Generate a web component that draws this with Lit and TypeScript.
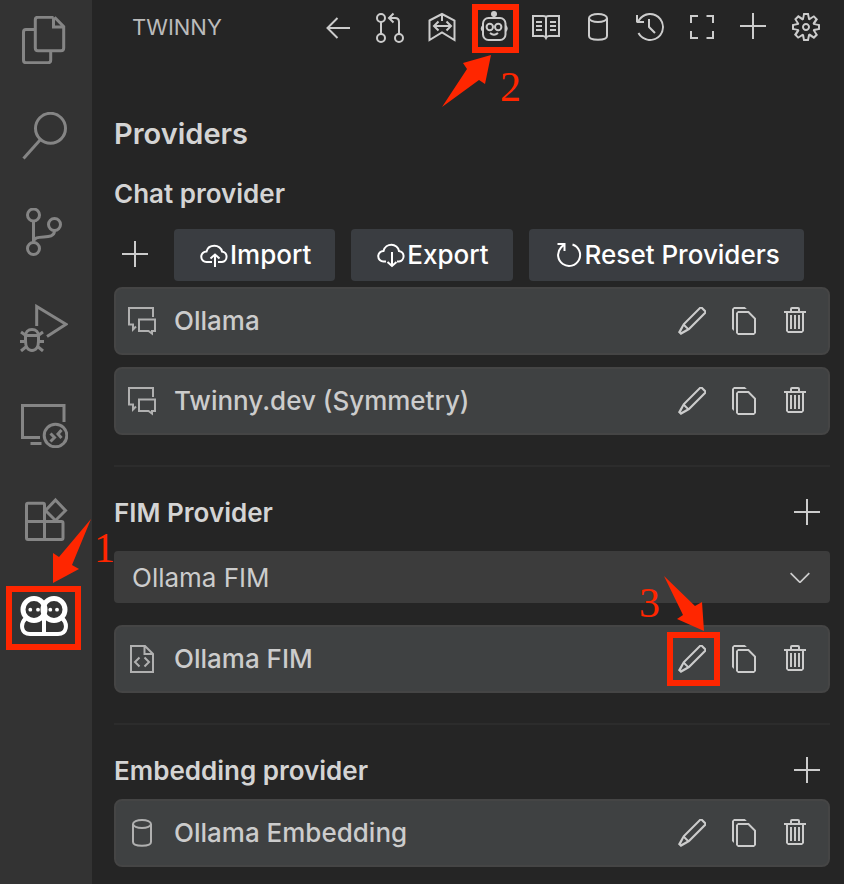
import { LitElement, html, svg, css, nothing, type SVGTemplateResult } from "lit";
import { customElement } from "lit/decorators.js";

const outline = (body: SVGTemplateResult, width = 2) =>
  svg`<g fill="none" stroke="currentColor" stroke-width=${width}>${body}</g>`;
const solid = (d: string) =>
  svg`<path transform="scale(2)" fill="currentColor" fill-rule="evenodd" d=${d} />`;

const database = outline(svg`<ellipse cx="16" cy="7" rx="9" ry="4" /><path d="M7 7V25C7 30 25 30 25 25V7" />`);

/* Drawn on a 32-unit grid */
const icons: Record<string, SVGTemplateResult> = {
  back: outline(svg`<path d="M28 17H6M15.5 7 5.5 17 15.5 27" />`),
  pull: outline(svg`<circle cx="7" cy="7" r="4" /><circle cx="7" cy="27" r="4" /><circle cx="25" cy="27" r="4" /><path d="M7 11V23M25 23V11Q25 7 21 7H15M19.5 2.5 15 7 19.5 11.5" />`),
  map: outline(svg`<path d="M3.5 9.5 16 3 28.5 9.5V29L16 21.5 3.5 29ZM16 3V10M8 15H25M12.5 10.5 8 15 12.5 19.5M20.5 10.5 25 15 20.5 19.5" />`),
  robot: svg`${outline(svg`<rect x="5" y="7" width="22.5" height="22" rx="5.5" /><circle cx="11.8" cy="16" r="3.2" /><circle cx="20.2" cy="16" r="3.2" /><path d="M12 22Q16 25.5 20 22M16 3V7" />`)}<circle cx="16" cy="3" r="3" fill="currentColor" /><path fill="currentColor" d="M4.5 14Q1 17.5 4.5 21ZM28 14Q31.5 17.5 28 21Z" />`,
  book: outline(svg`<path d="M16 6Q15 5 13 5H3V25H13Q15 25 16 27Q17 25 19 25H29V5H19Q17 5 16 6V26M6 11H12M6 15H12M6 19H12M20 11H26M20 15H26M20 19H26" />`),
  database,
  history: solid("M13.507 12.324a7 7 0 0 0 .065-8.56A7 7 0 0 0 2 4.393V2H1v3.5l.5.5H5V5H2.811a6.008 6.008 0 1 1-.135 5.77l-.887.462a7 7 0 0 0 11.718 1.092zm-3.361-.97l.708-.707L8 7.792V4H7v4l.146.354 3 3z"),
  full: outline(svg`<path d="M5 12V5H12M20.5 5H27V12M27 20V27H20.5M12 27H5V20" />`),
  add: solid("M14 7v1H8v6H7V8H1V7h6V1h1v6h6z"),
  gear: solid("M9.1 4.4L8.6 2H7.4l-.5 2.4-.7.3-2-1.3-.9.8 1.3 2-.2.7-2.4.5v1.2l2.4.5.3.8-1.3 2 .8.8 2-1.3.8.3.4 2.3h1.2l.5-2.4.8-.3 2 1.3.8-.8-1.3-2 .3-.8 2.3-.4V7.4l-2.4-.5-.3-.8 1.3-2-.8-.8-2 1.3-.7-.2zM9.4 1l.5 2.4L12 2.1l2 2-1.4 2.1 2.4.4v2.8l-2.4.5L14 12l-2 2-2.1-1.4-.5 2.4H6.6l-.5-2.4L4 13.9l-2-2 1.4-2.1L1 9.4V6.6l2.4-.5L2.1 4l2-2 2.1 1.4.4-2.4h2.8zm.6 7c0 1.1-.9 2-2 2s-2-.9-2-2 .9-2 2-2 2 .9 2 2zM8 9c.6 0 1-.4 1-1s-.4-1-1-1-1 .4-1 1 .4 1 1 1z"),
  edit: solid("M13.23 1h-1.46L3.52 9.25l-.16.22L1 13.59 2.41 15l4.12-2.36.22-.16L15 4.23V2.77L13.23 1zM2.41 13.59l1.51-3 1.45 1.45-2.96 1.55zm3.83-2.06L4.47 9.76l8-8 1.77 1.77-8 8z"),
  copy: solid("M4 4l1-1h5.414L14 6.586V14l-1 1H5l-1-1V4zm9 3l-3-3H5v10h8V7zM3 1L2 2v10l1 1V2h6.414l-1-1H3z"),
  trash: solid("M10 3h3v1h-1v9l-1 1H4l-1-1V4H2V3h3V2a1 1 0 0 1 1-1h3a1 1 0 0 1 1 1v1zM9 2H6v1h3V2zM4 13h7V4H4v9zm2-8H5v7h1V5zm1 0h1v7H7V5zm2 0h1v7H9V5z"),
  chevron: solid("M7.976 10.072l4.357-4.357.62.618L8.284 11h-.618L3 6.333l.619-.618 4.357 4.357z"),
  upload: outline(svg`<path d="M14 23H8.500A5.2 5.2 0 0 1 8.500 12.5C9.5 8.5 13 6.8 16.5 6.8S23.5 9 24 12.5A5.3 5.3 0 0 1 24 23H20M17 28V16M12.5 19.500 17 15.5 21.5 19.5" />`),
  download: outline(svg`<path d="M11 22.5H8.5A5.2 5.2 0 0 1 8.5 12C9.5 8 13 5.8 16.5 5.8S23.5 8.5 24 12A5.3 5.3 0 0 1 24 22.5H22M17 13V27M12.5 23 17 27 21.5 23" />`),
  reset: outline(svg`<path d="M19.5 5.5A11 11 0 1 1 8 8.5L11 5.5M4.5 5H11.5V12" />`),
  chat: outline(svg`<path d="M27 12V3H3V19.5H7V24.5L10 21.5M13 14.5H29V26H26V28.5L22.5 26H13Z" />`),
  code: outline(svg`<path d="M5 3H19L27 11V29H5ZM18.5 3V11H27M13.5 14.5 9 19 13.5 23.5M18.5 14.5 23 19 18.5 23.5" />`),
};

/* Drawn on a 48-unit grid */
const activityIcons: Record<string, SVGTemplateResult> = {
  files: outline(svg`<path d="M33.5 1.3H18Q15.3 1.3 15.3 4V32Q15.3 34.7 18 34.7H41Q43.7 34.7 43.7 32V10.5L34.5 1.3M33.5 1.3V11H43.7M15 13.5H6Q3.5 13.5 3.5 16V44Q3.5 46.7 6 46.7H28Q30.7 46.7 30.7 44V35" />`, 3),
  search: outline(svg`<circle cx="30.5" cy="16.3" r="15" /><path d="M20.5 27.5 3.5 46.5" />`, 3),
  git: outline(svg`<circle cx="13.5" cy="7" r="6" /><circle cx="34.5" cy="16.5" r="6" /><circle cx="13.5" cy="40.5" r="6" /><path d="M13.5 13V34.5C13.5 24 34.5 34 34.5 22.5" />`, 3),
  debug: outline(svg`<path d="M16.7 22V2.5L46 20.3 27 32.5M6 31.5H18M0 37.5H6M18 37.5H24M1 28 6.5 32M23 28 17.5 32M1 47 7 42M23 47 17 42" /><path d="M12 25.5C16 25.5 18.5 28 18.5 32V37C18.5 43 16 46.5 12 46.5S5.5 43 5.5 37V32C5.5 28 8 25.5 12 25.5Z" />`, 3),
  remote: outline(svg`<path d="M44 22V5.5H2.5V37.5H20M10.5 43.5H21.5M30.5 33.5 34.5 37.5 30.5 41.5M41.5 30 38 34 41.5 38" /><circle cx="35.5" cy="35.5" r="11.3" />`, 3),
  blocks: outline(svg`<path d="M24.5 43.5V9Q24.5 7.3 23 7.3H8Q6.5 7.3 6.5 9V42Q6.5 43.5 8 43.5H41.5Q43 43.5 43 42V27Q43 25.5 41.5 25.5H6.5M35.5 4 45.5 14.5 35.5 24.5 25.5 14.5Z" />`, 3),
  twinny: svg`${outline(svg`<circle cx="14" cy="17.5" r="11" /><circle cx="34" cy="17.5" r="11" />`, 5)}${outline(svg`<path d="M5.500 26.5C0 32 1 42 10 42H38C47 42 48 32 42.5 26.5M24 26V42" />`, 4)}<g fill="currentColor"><circle cx="10.3" cy="17.7" r="1.9" /><circle cx="18" cy="17.7" r="1.9" /><circle cx="30.3" cy="17.7" r="1.9" /><circle cx="37" cy="17.7" r="1.9" /></g>`,
};

const icon = (name: string) => html`<svg class="icon" viewBox="0 0 32 32" aria-hidden="true">${icons[name]}</svg>`;

/* Numbered call-outs; coordinates start at the centre of the marked control */
interface Mark { n: string; box: [number, number, number, number]; arrow: string; at: [number, number]; }
const marks: Record<string, Mark> = {
  twinny: { n: "1", box: [-35, -27, 69, 58], arrow: "9,-33 9,-63 15,-59 47,-97 28,-51 35,-47", at: [50, -54] },
  robot: { n: "2", box: [-19, -20, 41, 43], arrow: "-3,28 -31,36 -27,42 -52,80 -15,53 -9,57", at: [6, 74] },
  edit: { n: "3", box: [-22, -24, 47, 48], arrow: "12,-28 10,-57 3,-53 -28,-83 -9,-44 -15,-40", at: [-53, -42] },
};
const mark = (m: Mark) => html`<svg class="mark" aria-hidden="true">
  <rect x=${m.box[0]} y=${m.box[1]} width=${m.box[2]} height=${m.box[3]} />
  <polygon points=${m.arrow} /><text x=${m.at[0]} y=${m.at[1]}>${m.n}</text>
</svg>`;

const iconButton = (name: string, label: string, m?: Mark) => html`<button class="icon-button" aria-label=${label} title=${label}>${icon(name)}${m ? mark(m) : nothing}</button>`;

const card = (name: string, kind: string, m?: Mark) => html`<article class="card">
  <span class="kind">${icon(kind)}</span><span class="name">${name}</span>
  ${iconButton("edit", `Edit ${name}`, m)}${iconButton("copy", `Copy ${name}`)}${iconButton("trash", `Delete ${name}`)}
</article>`;

@customElement("app-root")
export class AppRoot extends LitElement {
  static styles = css`
    :host { display: flex; min-height: 100vh; background: #252525; color: #d4d4d4;
      font-family: Inter, "Liberation Sans", sans-serif; font-size: 26px; line-height: 32px; }
    * { box-sizing: border-box; }
    button, select { font: inherit; color: inherit; border: 0; margin: 0; cursor: pointer; }
    button { background: none; padding: 0; }
    .icon { display: block; width: 32px; height: 32px; flex: none; }
    .activity { flex: none; width: 92px; padding: 16px 20px; background: #333333; display: flex; flex-direction: column; gap: 48px; }
    .activity-button { position: relative; width: 48px; height: 48px; color: #858585; }
    .activity-button svg:first-child { display: block; width: 48px; height: 48px; }
    .activity-button.active { color: #ffffff; }
    .panel { flex: 1; min-width: 0; }
    .bar { display: flex; align-items: center; gap: 20px; height: 54px; padding: 0 22px 0 40px; }
    .title { flex: 1; font-size: 22px; color: #bbbbbb; }
    .icon-button { position: relative; flex: none; width: 32px; height: 32px; color: #cccccc; }
    .content { padding: 62px 14px 16px 22px; }
    h1, h2 { margin: 0; font-weight: 600; }
    h1 { font-size: 29px; line-height: 36px; margin-bottom: 26px; }
    h2 { font-size: 26px; }
    .tools { display: flex; align-items: center; gap: 16px; margin: 19px 0 6px; padding-left: 6px; }
    .tools .icon-button { margin-right: 6px; }
    .action { display: flex; align-items: center; height: 52px; padding: 0 24px; border-radius: 4px; background: #3a3d41; color: #ffffff; font-weight: 500; white-space: nowrap; }
    .cards { display: grid; gap: 12px; }
    .card { display: flex; align-items: center; gap: 20px; height: 68px; padding: 0 16px 0 10px; background: #3f4142; border: 2px solid #454545; border-radius: 8px; color: #cccccc; }
    .kind { color: #b0b0b0; margin-right: -4px; }
    .name { flex: 1; font-weight: 500; }
    hr { height: 2px; margin: 30px 0 20px; border: 0; background: #2c2c2c; }
    .heading { display: flex; align-items: center; justify-content: space-between; height: 52px; padding-right: 6px; }
    .picker { position: relative; display: block; margin: 12px 0 22px; color: #cccccc; }
    .picker select { display: block; width: 100%; height: 52px; padding: 2px 56px 0 18px; appearance: none; background: #3c3c3c; border-radius: 4px; }
    .picker .icon { position: absolute; right: 14px; top: 10px; pointer-events: none; }
    .embed { margin-top: 2px; }
    .mark { position: absolute; left: 50%; top: 50%; width: 1px; height: 1px; overflow: visible; pointer-events: none; z-index: 1; }
    .mark rect { fill: none; stroke: #ff2600; stroke-width: 6px; }
    .mark polygon, .mark text { fill: #ff2600; }
    .mark text { font: 42px "Liberation Serif", serif; }
  `;

  private activity(name: string, label: string) {
    const active = name === "twinny";
    return html`<button class="activity-button ${active ? "active" : ""}" aria-label=${label} title=${label}><svg viewBox="0 0 48 48" aria-hidden="true">${activityIcons[name]}</svg>${active ? mark(marks.twinny) : nothing}</button>`;
  }

  render() {
    return html`
      <nav class="activity" aria-label="Activity bar">
        ${this.activity("files", "Explorer")}
        ${this.activity("search", "Search")}
        ${this.activity("git", "Source control")}
        ${this.activity("debug", "Run and debug")}
        ${this.activity("remote", "Remote explorer")}
        ${this.activity("blocks", "Extensions")}
        ${this.activity("twinny", "Twinny")}
      </nav>
      <main class="panel">
        <header class="bar">
          <span class="title">TWINNY</span>
          ${iconButton("back", "Back")}
          ${iconButton("pull", "Review")}
          ${iconButton("map", "Symmetry")}
          ${iconButton("robot", "Providers", marks.robot)}
          ${iconButton("book", "Templates")}
          ${iconButton("database", "Embeddings")}
          ${iconButton("history", "History")}
          ${iconButton("full", "Full screen")}
          ${iconButton("add", "New chat")}
          ${iconButton("gear", "Settings")}
        </header>
        <div class="content">
          <h1>Providers</h1>
          <section>
            <h2>Chat provider</h2>
            <div class="tools">
              ${iconButton("add", "Add chat provider")}
              <button class="action">${icon("upload")}Import</button>
              <button class="action">${icon("download")}Export</button>
              <button class="action">${icon("reset")}Reset Providers</button>
            </div>
            <div class="cards">${card("Ollama", "chat")}${card("Twinny.dev (Symmetry)", "chat")}</div>
          </section>
          <hr />
          <section>
            <div class="heading"><h2>FIM Provider</h2>${iconButton("add", "Add FIM provider")}</div>
            <div class="picker">
              <select aria-label="FIM Provider"><option>Ollama FIM</option></select>
              ${icon("chevron")}
            </div>
            ${card("Ollama FIM", "code", marks.edit)}
          </section>
          <hr />
          <section>
            <div class="heading"><h2>Embedding provider</h2>${iconButton("add", "Add embedding provider")}</div>
            <div class="embed">${card("Ollama Embedding", "database")}</div>
          </section>
        </div>
      </main>
    `;
  }
}
